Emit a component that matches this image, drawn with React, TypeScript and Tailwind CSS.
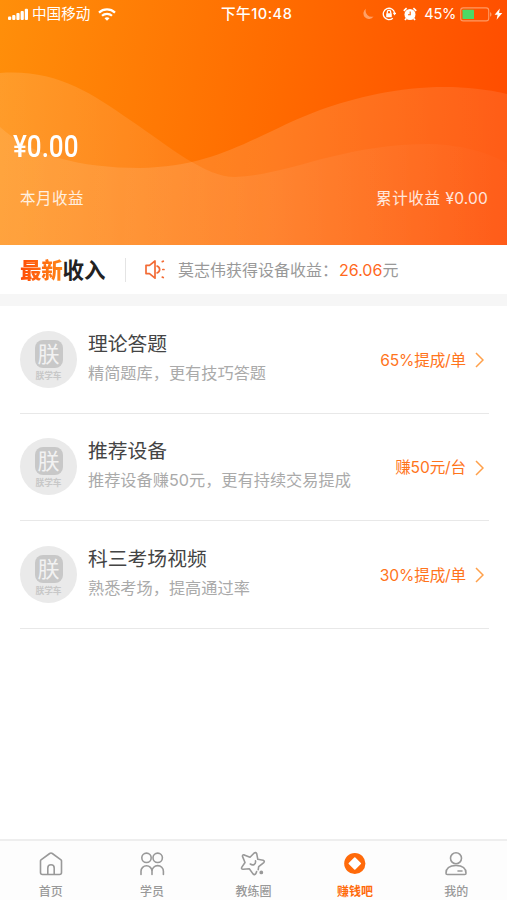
import type { ReactNode } from "react";

const tasks = [
  { title: "理论答题", description: "精简题库，更有技巧答题", reward: "65%提成/单" },
  { title: "推荐设备", description: "推荐设备赚50元，更有持续交易提成", reward: "赚50元/台" },
  { title: "科三考场视频", description: "熟悉考场，提高通过率", reward: "30%提成/单" },
];

function StatusBar() {
  return (
    <div className="relative flex h-7 items-center justify-between pl-2 pr-1 text-white">
      <div className="flex items-center">
        <svg width="20" height="13" viewBox="0 0 20 13" fill="currentColor">
          <rect x="0" y="8.5" width="3.2" height="3.5" rx="1" />
          <rect x="4.2" y="7" width="3.2" height="5" rx="1" />
          <rect x="8.4" y="5" width="3.2" height="7" rx="1" />
          <rect x="12.6" y="3" width="3.2" height="9" rx="1" />
          <rect x="16.8" y="0.8" width="3.2" height="11.2" rx="1" />
        </svg>
        <span className="ml-1 text-[14.6px] leading-5">中国移动</span>
        <svg className="ml-2" width="18" height="13" viewBox="0 0 18 13" fill="none" stroke="currentColor" strokeWidth="2.2">
          <path d="M1 4.6C5.5.4 12.5.4 17 4.6" />
          <path d="M4 7.8C6.8 5.2 11.2 5.2 14 7.8" />
          <path d="M6.5 10.2C8 9 10 9 11.5 10.2L9 12.7Z" fill="currentColor" stroke="none" />
        </svg>
      </div>
      <span className="absolute left-[221px] text-[14.6px] font-medium leading-5 tracking-[0.5px]">下午10:48</span>
      <div className="flex items-center">
        <svg className="opacity-40" width="12" height="12" viewBox="0 0 12 12" fill="currentColor">
          <path d="M4 .8A5.5 5.5 0 1 0 11.5 8.5 6 6 0 0 1 4 .8Z" />
        </svg>
        <svg className="ml-2" width="14" height="14" viewBox="0 0 14 14" fill="none" stroke="currentColor" strokeWidth="1.3">
          <path d="M10.8 11.2A5.7 5.7 0 1 1 12.6 6" />
          <path d="M10.7 5.7h3.6l-1.8 2.7Z" fill="currentColor" stroke="none" />
          <path d="M5.3 6.5V5a1.7 1.7 0 0 1 3.4 0v1.5" />
          <rect x="4.2" y="6.2" width="5.600" height="4" rx=".5" fill="currentColor" stroke="none" />
        </svg>
        <svg className="ml-[7px]" width="14" height="14" viewBox="0 0 14 14">
          <circle cx="7" cy="7.5" r="5.5" fill="currentColor" />
          <path d="M.8 3.8 3.6 1.2M13.2 3.8 10.4 1.2M3.2 11.5l-1.2 1.5M10.8 11.5l1.2 1.5" stroke="currentColor" strokeWidth="1.7" />
          <path d="M7.2 4.5v3.3H5" fill="none" stroke="#ff6200" strokeWidth="1.1" />
        </svg>
        <span className="ml-[7px] text-[14.6px] leading-5 tracking-[-0.3px]">45%</span>
        <svg className="ml-1" width="32" height="15" viewBox="0 0 32 15">
          <rect x=".7" y=".9" width="28" height="13" rx="2.5" fill="none" stroke="#ff9a63" strokeWidth="1.1" />
          <rect x="2.5" y="2.7" width="11.5" height="9.4" rx=".6" fill="#4cd964" />
          <path d="M30 5.3c2 .6 2 3.8 0 4.4Z" fill="#ff9a63" />
        </svg>
        <svg className="ml-0.5" width="9" height="12" viewBox="0 0 9 12" fill="currentColor">
          <path d="M5.8.4.6 6.8h3L2.6 11.7 8.3 4.9H5.1Z" />
        </svg>
      </div>
    </div>
  );
}

function Waves() {
  return (
    <svg className="absolute inset-0" width="507" height="245" viewBox="0 0 507 245">
      <defs>
        <linearGradient id="back" x1="0" x2="507" y1="0" y2="0" gradientUnits="userSpaceOnUse">
          <stop stopColor="#fff" stopOpacity="0.13" />
          <stop offset="0.5" stopColor="#fff" stopOpacity="0.07" />
          <stop offset="1" stopColor="#fff" stopOpacity="0.01" />
        </linearGradient>
        <linearGradient id="front" x1="0" x2="507" y1="0" y2="0" gradientUnits="userSpaceOnUse">
          <stop stopColor="#fff" stopOpacity="0.1" />
          <stop offset="0.55" stopColor="#fff" stopOpacity="0.13" />
          <stop offset="1" stopColor="#fff" stopOpacity="0.09" />
        </linearGradient>
      </defs>
      <path d="M0 73C55 69 90 92 130 120C170 147 205 177 235 177C290 175 340 144 430 144C465 145 490 154 507 163V245H0Z" fill="url(#back)" />
      <path d="M0 127C30 155 80 168 140 168C220 167 260 132 320 110C370 92 440 78 507 94V245H0Z" fill="url(#front)" />
    </svg>
  );
}

function Header() {
  return (
    <header className="relative h-[245px] bg-[linear-gradient(100deg,#ff8f0a_0%,#ff6a00_54%,#ff4a00_100%)] text-white">
      <Waves />
      <div className="relative">
        <StatusBar />
        <div className="px-[13px] pt-[101px]">
          <p className="w-[82px] origin-left scale-x-[0.84] whitespace-nowrap font-[Roboto] text-[31px] font-medium leading-9">¥0.00</p>
        </div>
        <div className="flex justify-between pl-5 pr-[19px] pt-[22px] text-[15.5px] leading-6 text-white/85">
          <span className="tracking-[0.5px]">本月收益</span>
          <span>
            <span className="tracking-[0.6px]">累计收益 </span>
            <span className="tracking-[0.2px]">¥0.00</span>
          </span>
        </div>
      </div>
    </header>
  );
}

function Notice() {
  return (
    <section className="flex h-[49px] items-center pl-5">
      <h2 className="w-[86px] whitespace-nowrap text-[21.5px] font-bold leading-8 tracking-[-0.2px] text-[#222]">
        <span className="bg-linear-to-r from-[#ff4b08] to-[#ff8616] bg-clip-text font-black text-transparent">最新</span>收入
      </h2>
      <div className="ml-[19px] h-6 w-px bg-[#e4e4e4]" />
      <svg className="ml-[18px]" width="22" height="21" viewBox="0 0 22 21" fill="none" stroke="#f36b35" strokeWidth="1.7" strokeLinejoin="round">
        <path d="M2 6.3h3.5l5.5-4.300v17.200l-5.500-4.600H2Z" />
        <path d="M12.500 6.800c4.200 1.600 4.200 5.800 0 7.400" />
        <path d="M18.300 2.600l1-.4M18.800 10.500h1.200M18.300 18.100l1 .4" strokeLinecap="round" />
      </svg>
      <p className="ml-3 text-[16px] leading-6 text-[#999]">
        莫志伟获得设备收益：<span className="ml-px text-[#ff681d]">26.06</span>元
      </p>
    </section>
  );
}

function Avatar() {
  return (
    <div className="flex h-[57px] w-[57px] shrink-0 flex-col items-center rounded-full bg-[#eaeaea] pt-[9px]">
      <div className="flex h-7 w-7 items-center justify-center rounded-lg bg-[#c8c8c8] text-[22px] leading-7 text-[#f2f2f2]">
        朕
      </div>
      <span className="mt-[3px] text-[8.7px] font-bold leading-[11px] text-[#c8c8c8]">朕学车</span>
    </div>
  );
}

function TaskRow({ title, description, reward }: { title: string; description: string; reward: string }) {
  return (
    <li className="flex h-[107.5px] items-center border-b border-[#e8e8e8]">
      <Avatar />
      <div className="ml-[11px] flex-1 pb-0.5">
        <h3 className="text-[19.8px] leading-[30px] text-[#444]">{title}</h3>
        <p className="whitespace-nowrap text-[16.2px] leading-[29px] text-[#aaa]">{description}</p>
      </div>
      <span className="whitespace-nowrap pt-[3px] text-[15.6px] leading-6 tracking-[-0.15px] text-[#ff741b]">{reward}</span>
      <svg className="ml-[9px] mr-[5px] mt-0.5" width="9" height="16" viewBox="0 0 9 16" fill="none" stroke="#ffa04a" strokeWidth="1.5">
        <path d="M1 1l7 7-7 7" />
      </svg>
    </li>
  );
}

function Icon({ children }: { children: ReactNode }) {
  return (
    <svg width="26" height="26" viewBox="0 0 26 26" fill="none" stroke="currentColor" strokeWidth="1.6" strokeLinecap="round" strokeLinejoin="round">
      {children}
    </svg>
  );
}

const tabs = [
  {
    label: "首页",
    icon: (
      <>
        <path d="M2.5 9.8Q2.5 9.2 3 8.8L11.7 2.5Q13 1.6 14.3 2.5L23 8.8Q23.5 9.2 23.5 9.8V21.5Q23.5 23.5 21.5 23.5H4.5Q2.5 23.5 2.5 21.5Z" />
        <path d="M9.8 23v-6a3.2 3.2 0 0 1 6.4 0v6" />
      </>
    ),
  },
  {
    label: "学员",
    icon: (
      <>
        <circle cx="7.5" cy="6.8" r="4.7" />
        <circle cx="18.7" cy="6.8" r="4.7" />
        <path d="M2 23.5v-3.200a5.500 5.500 0 0 1 11 0v3.200M13 20.300a5.700 5.700 0 0 1 11.400 0v3.200" />
      </>
    ),
  },
  {
    label: "教练圈",
    icon: (
      <>
        <path d="M18.2 18.6L18.7 15.7L23.8 11.6Q25 10 23.2 9.2L17.8 8.3L16.7 2.7Q15.8.9 14.2 2L10 6.3L4.2 3.9Q2.3 3.5 2.5 5.4L5 11.5L1.7 16.4Q1.2 18.4 3.1 18.3L9.3 17.8L13 22.9Q14.5 24.5 15.9 22.5L16.6 20.6" />
        <path d="M10.300 13c2.800 2 5.800.3 5.200-3.200" />
        <circle cx="21.3" cy="21.4" r="1.1" fill="currentColor" />
      </>
    ),
  },
  {
    label: "赚钱吧",
    active: true,
    icon: (
      <>
        <circle cx="12.8" cy="12.5" r="10.6" fill="#ff6a0a" stroke="none" />
        <path d="M12.8 7l5.500 5.500-5.500 5.500-5.500-5.500Z" fill="#fff" stroke="#fff" />
      </>
    ),
  },
  {
    label: "我的",
    icon: (
      <>
        <circle cx="13" cy="7.2" r="5.5" />
        <path d="M3 22.200c0-5 4-7.700 10-7.700s10 2.700 10 7.700q0 1.300-1.300 1.300H4.300Q3 23.500 3 22.200ZM15 20h4" />
      </>
    ),
  },
];

function TabBar() {
  return (
    <nav className="mt-auto grid h-[61px] grid-cols-5 border-t-2 border-[#eee] bg-[#fdfdfd]">
      {tabs.map((tab) => (
        <a key={tab.label} className={`flex flex-col items-center pt-2.5 ${tab.active ? "text-[#ff6a0a]" : "text-[#999]"}`}>
          <Icon>{tab.icon}</Icon>
          <span className={`mt-1.5 text-[12px] leading-[18px] ${tab.active ? "font-bold" : "font-medium"}`}>{tab.label}</span>
        </a>
      ))}
    </nav>
  );
}

export default function App() {
  return (
    <div className="flex h-[900px] w-[507px] flex-col overflow-hidden bg-white font-[Inter,'Noto_Sans_CJK_SC',sans-serif]">
      <Header />
      <Notice />
      <main className="border-t-12 border-[#f6f6f6]">
        <ul className="ml-5 mr-[18px]">
          {tasks.map((task) => (
            <TaskRow key={task.title} {...task} />
          ))}
        </ul>
      </main>
      <TabBar />
    </div>
  );
}
